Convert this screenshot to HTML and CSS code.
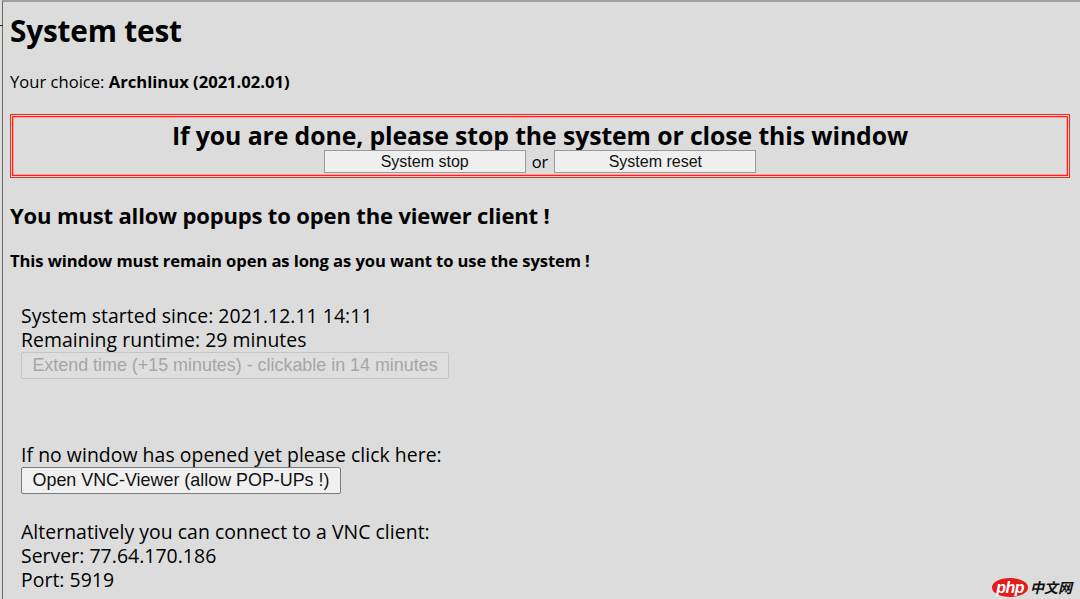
FILE: index.html
```html
<!DOCTYPE html>
<html>
<head>
<meta charset="utf-8">
<link rel="stylesheet" href="styles.css">
</head>
<body>
<div class="frame">
  <h1 class="title">System test</h1>
  <p class="choice">Your choice: <b>Archlinux (2021.02.01)</b></p>
  <div class="stopbox">
    <div class="stop-title">If you are done, please stop the system or close this window</div>
    <div class="stop-row">
      <button class="btn btn-sys">System stop</button>
      <span class="or">or</span>
      <button class="btn btn-sys">System reset</button>
    </div>
  </div>
  <h2 class="popups">You must allow popups to open the viewer client !</h2>
  <h3 class="remain">This window must remain open as long as you want to use the system !</h3>
  <div class="info">
    <div class="line">System started since: 2021.12.11 14:11</div>
    <div class="line">Remaining runtime: 29 minutes</div>
    <button class="btn btn-extend" disabled>Extend time (+15 minutes) - clickable in 14 minutes</button>
    <div class="line gap-big">If no window has opened yet please click here:</div>
    <button class="btn btn-open">Open VNC-Viewer (allow POP-UPs !)</button>
    <div class="line gap-mid">Alternatively you can connect to a VNC client:</div>
    <div class="line">Server: 77.64.170.186</div>
    <div class="line">Port: 5919</div>
  </div>
  <div class="tick tick-l"></div>
  <div class="tick tick-r"></div>
</div>
<div class="watermark"><span class="wm-php">php</span><span class="wm-cn">中文网</span></div>
</body>
</html>
```
FILE: styles.css
```css
html, body {
  margin: 0;
  padding: 0;
  background: #dcdcdc;
  height: 100%;
  overflow: hidden;
}
body {
  font-family: "Open Sans", "Noto Sans", sans-serif;
  color: #000;
  position: relative;
}
.frame {
  position: relative;
  margin-left: 2px;
  width: 1074px;
  height: 597px;
  border-top: 2px solid #a0a0a0;
  border-left: 1px solid #6a6a6a;
  border-right: 2px solid #555;
  padding-left: 7px;
  box-sizing: content-box;
}
.tick {
  position: absolute;
  top: 23px;
  height: 1px;
  width: 3px;
  background: #222;
}
.tick-l { left: -3px; }
.tick-r { right: -5px; }
.title {
  margin: 12px 0 0;
  font-size: 29.8px;
  line-height: 34px;
  font-weight: 700;
  letter-spacing: -0.2px;
}
.choice {
  margin: 24px 0 0;
  font-size: 16.6px;
  line-height: 20px;
}
.choice b { font-weight: 700; }
.stopbox {
  margin: 22px 0 0;
  width: 1054px;
  border: 3px double #f21;
  box-shadow: inset 0 0 0 1px #f9a;
  padding: 3px 0 2px;
  text-align: center;
}
.stop-title {
  font-size: 24.8px;
  font-weight: 700;
  line-height: 30px;
  letter-spacing: -0.1px;
}
.stop-row {
  display: flex;
  justify-content: center;
  align-items: center;
  height: 23px;
  gap: 5px;
}
.or {
  font-size: 16.5px;
  line-height: 20px;
  margin: 0 1px;
}
.btn {
  font-family: "Liberation Sans", Arial, sans-serif;
  color: #000;
  background: #efefef;
  border: 1px solid #8f8f8f;
  border-radius: 2px;
  padding: 0;
  margin: 0;
  box-sizing: border-box;
}
.btn-sys {
  width: 202px;
  height: 23px;
  font-size: 16px;
  border-color: #9a9a9a;
  border-radius: 0;
  color: #111;
}
.popups {
  margin: 24px 0 0;
  font-size: 22px;
  font-weight: 700;
  line-height: 26px;
  letter-spacing: -0.15px;
}
.remain {
  margin: 23px 0 0;
  font-size: 16.6px;
  font-weight: 700;
  line-height: 20px;
  letter-spacing: -0.1px;
}
.info {
  margin-top: 33px;
  padding-left: 11px;
  display: flex;
  flex-direction: column;
  align-items: flex-start;
}
.line {
  font-size: 19.4px;
  line-height: 24px;
  letter-spacing: 0.05px;
}
.gap-big { margin-top: 64px; }
.gap-mid { margin-top: 26px; }
.btn-extend {
  height: 27px;
  width: 428px;
  font-size: 17.9px;
  color: #a6a6a6;
  background: #dedede;
  border-color: #c6c6c6;
}
.btn-open {
  height: 27px;
  width: 320px;
  font-size: 17.9px;
  color: #111;
  background: #f0f0f0;
  border-color: #7a7a7a;
}
.watermark {
  position: absolute;
  right: 8px;
  top: 578px;
  display: flex;
  align-items: center;
  gap: 2px;
  white-space: nowrap;
}
.wm-php {
  display: inline-block;
  background: #e21b1b;
  color: #fff;
  font-family: "Liberation Sans", Arial, sans-serif;
  font-style: italic;
  font-weight: 700;
  font-size: 16px;
  line-height: 19px;
  padding: 0 4px;
  border-radius: 50%;
  letter-spacing: -0.5px;
}
.wm-cn {
  font-family: "Noto Sans CJK SC", sans-serif;
  font-style: italic;
  font-weight: 700;
  font-size: 14px;
  line-height: 19px;
  color: #111;
}
```
